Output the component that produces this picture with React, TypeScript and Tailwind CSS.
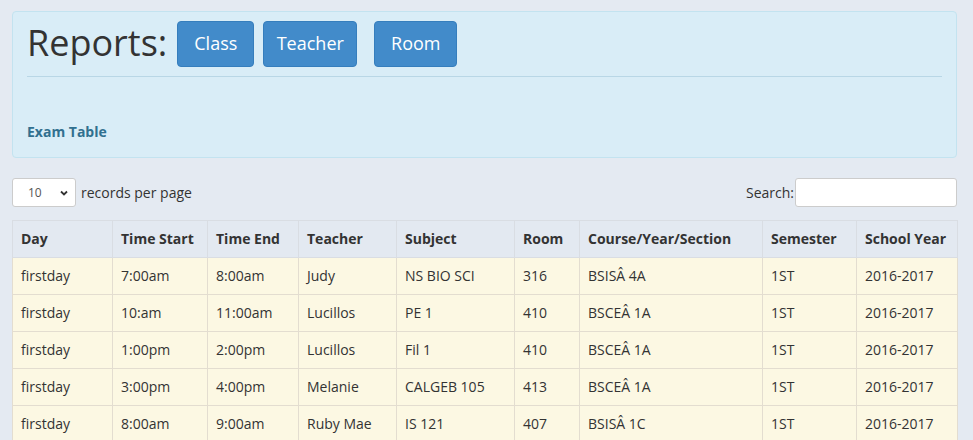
import React from "react";

const cols = [
  { name: "Day", w: 100 },
  { name: "Time Start", w: 95 },
  { name: "Time End", w: 91 },
  { name: "Teacher", w: 98 },
  { name: "Subject", w: 118 },
  { name: "Room", w: 65 },
  { name: "Course/Year/Section", w: 183 },
  { name: "Semester", w: 94 },
  { name: "School Year", w: 101 },
];

const rows = [
  ["firstday", "7:00am", "8:00am", "Judy", "NS BIO SCI", "316", "BSISÂ 4A", "1ST", "2016-2017"],
  ["firstday", "10:am", "11:00am", "Lucillos", "PE 1", "410", "BSCEÂ 1A", "1ST", "2016-2017"],
  ["firstday", "1:00pm", "2:00pm", "Lucillos", "Fil 1", "410", "BSCEÂ 1A", "1ST", "2016-2017"],
  ["firstday", "3:00pm", "4:00pm", "Melanie", "CALGEB 105", "413", "BSCEÂ 1A", "1ST", "2016-2017"],
  ["firstday", "8:00am", "9:00am", "Ruby Mae", "IS 121", "407", "BSISÂ 1C", "1ST", "2016-2017"],
];

export default function App() {
  return (
    <div
      className="w-[973px] h-[440px] overflow-hidden bg-[#e4eaf2] text-[#333] pt-[11px] pl-[12px]"
      style={{ fontFamily: '"Open Sans", "Noto Sans", sans-serif' }}
    >
      <div className="w-[945px]">
        <div className="border border-[#c3e3f0] bg-[#d9edf7] rounded-[4px] px-[14px] pt-[9px] pb-[15px]">
          <div className="flex items-center h-[46px]">
            <h1 className="text-[36px] leading-none text-[#333] font-normal mr-[10px] -mt-[2px]">Reports:</h1>
            <button className="w-[77px] h-[46px] rounded-[4px] bg-[#428bca] border border-[#357ebd] text-white text-[18px] pb-[2px]">Class</button>
            <button className="ml-[9px] w-[94px] h-[46px] rounded-[4px] bg-[#428bca] border border-[#357ebd] text-white text-[18px] pb-[2px]">Teacher</button>
            <button className="ml-[17px] w-[83px] h-[46px] rounded-[4px] bg-[#428bca] border border-[#357ebd] text-white text-[18px] pb-[2px]">Room</button>
          </div>
          <div className="mt-[9px] h-px bg-[#b9d7e6]" />
          <div className="mt-[45px] text-[14px] leading-[20px] font-bold text-[#31708f]">Exam Table</div>
        </div>

        <div className="flex items-center justify-between mt-[20px] h-[29px]">
          <div className="flex items-center">
            <div className="w-[64px] h-[29px] bg-white border border-[#ccc] rounded-[3px] flex items-center justify-between pl-[15px] pr-[6px]">
              <span className="text-[12px] text-[#555]">10</span>
              <svg width="10" height="10" viewBox="0 0 10 10">
                <path d="M2 3.5 L5 6.5 L8 3.5" fill="none" stroke="#333" strokeWidth="1.8" />
              </svg>
            </div>
            <span className="ml-[5px] text-[14px]">records per page</span>
          </div>
          <div className="flex items-center">
            <span className="text-[14px] mr-px">Search:</span>
            <div className="w-[162px] h-[29px] bg-white border border-[#ccc] rounded-[3px]" />
          </div>
        </div>

        <table className="mt-[13px] border-collapse text-[14px] w-[945px] table-fixed">
          <colgroup>
            {cols.map((c) => (
              <col key={c.name} style={{ width: c.w }} />
            ))}
          </colgroup>
          <thead>
            <tr className="bg-[#e3e9f1]">
              {cols.map((c) => (
                <th
                  key={c.name}
                  className="border border-[#d9dde3] px-[8px] h-[37px] text-left font-bold leading-[20px] whitespace-nowrap"
                >
                  {c.name}
                </th>
              ))}
            </tr>
          </thead>
          <tbody>
            {rows.map((r, i) => (
              <tr key={i} className="bg-[#fcf8e3]">
                {r.map((v, j) => (
                  <td key={j} className="border border-[#e3ddd0] px-[8px] h-[37px] leading-[20px] whitespace-nowrap">
                    {v}
                  </td>
                ))}
              </tr>
            ))}
          </tbody>
        </table>
      </div>
    </div>
  );
}
